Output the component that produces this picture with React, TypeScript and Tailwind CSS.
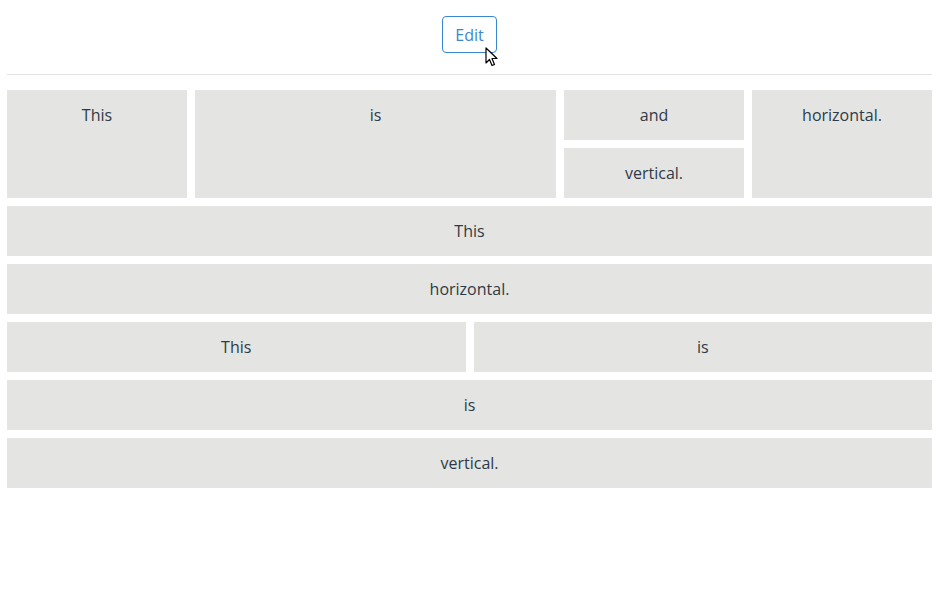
import React from 'react';

const box = 'bg-[#e4e5e2] text-center py-[13px] leading-6';

function Box({ text, className = '' }: { text: string; className?: string }) {
  return <div className={`${box} ${className}`}>{text}</div>;
}

function Cursor() {
  return (
    <svg className="absolute left-[485px] top-[47px] pointer-events-none" width="14" height="21" viewBox="0 0 14 21">
      <path d="M1 1 L1 16 L4.5 12.5 L7 18.5 L9.5 17.5 L7 11.5 L12 11.5 Z" fill="#fff" stroke="#000" strokeWidth="1.2" strokeLinejoin="round" />
    </svg>
  );
}

export default function App() {
  return (
    <div className="relative w-[936px] h-[589px] bg-white pl-[7px] pr-[4px] text-[16px] text-[#2f3a48]" style={{ fontFamily: '"Open Sans", sans-serif' }}>
      <div className="flex justify-center pt-4 pb-[21px] border-b border-[#e3e3e3]">
        <button className="h-[37px] w-[55px] border border-[#3a86cf] rounded-[4px] text-[#3a86cf] leading-6">Edit</button>
      </div>
      <div className="mt-[15px] flex flex-col gap-2">
        <div className="flex gap-2 h-[108px]">
          <Box text="This" className="w-[180px]" />
          <Box text="is" className="flex-1" />
          <div className="w-[180px] flex flex-col gap-2">
            <Box text="and" />
            <Box text="vertical." />
          </div>
          <Box text="horizontal." className="w-[180px]" />
        </div>
        <Box text="This" />
        <Box text="horizontal." />
        <div className="flex gap-2">
          <Box text="This" className="flex-1" />
          <Box text="is" className="flex-1" />
        </div>
        <Box text="is" />
        <Box text="vertical." />
      </div>
      <Cursor />
    </div>
  );
}
